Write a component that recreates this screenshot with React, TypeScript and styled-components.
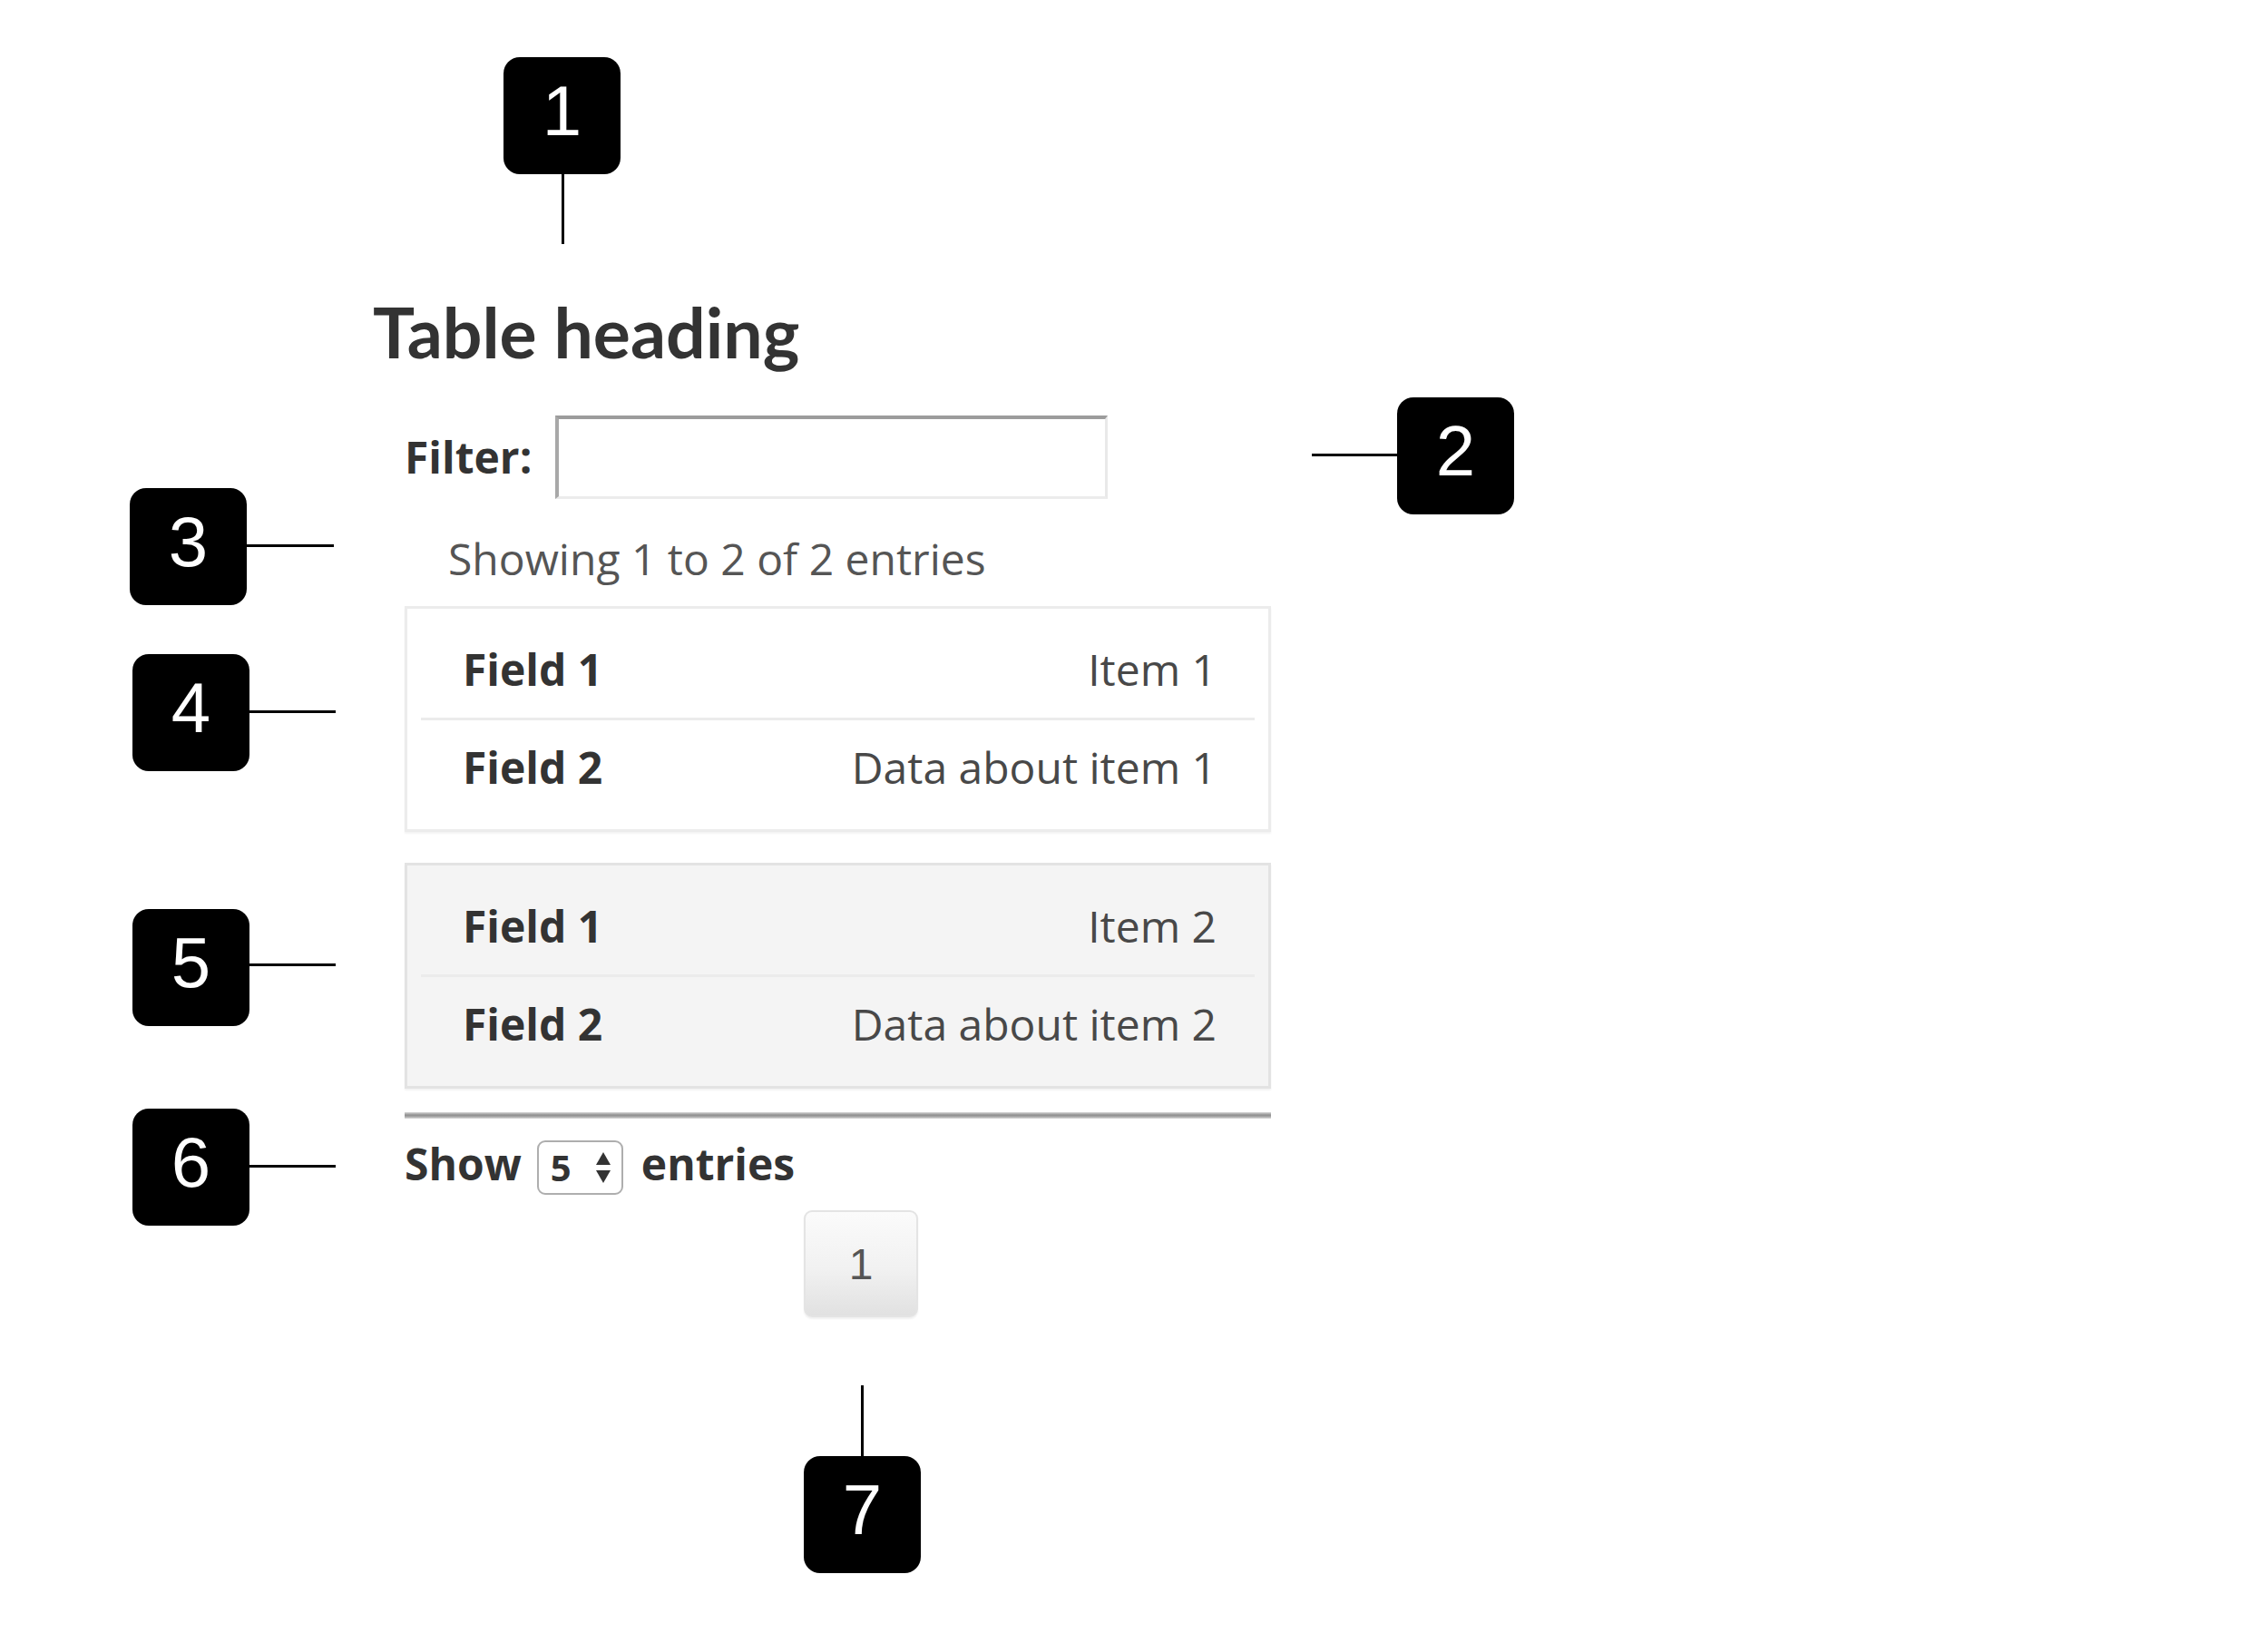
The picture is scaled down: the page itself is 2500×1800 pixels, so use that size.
import React from "react";
import styled, { createGlobalStyle } from "styled-components";

const Global = createGlobalStyle`
  html, body { margin: 0; padding: 0; background: #ffffff; }
  * { box-sizing: border-box; }
`;

const Page = styled.div`
  position: relative;
  width: 2500px;
  height: 1800px;
  overflow: hidden;
  font-family: "Open Sans", "Liberation Sans", sans-serif;
  color: #333;
`;

const Column = styled.main`
  width: calc(955px + 446px);
  padding: 318px 0 0 446px;
  display: flex;
  flex-direction: column;
  align-items: stretch;
`;

const Heading = styled.h2`
  margin: 0 0 0 -35px;
  font-family: Lato, "Open Sans", sans-serif;
  font-weight: 700;
  font-size: 77px;
  line-height: 94px;
  color: #333;
`;

const FilterRow = styled.div`
  display: flex;
  align-items: center;
  gap: 26px;
  margin-top: 46px;
`;

const FilterLabel = styled.label`
  font-weight: 700;
  font-size: 48px;
  line-height: 1.362;
  color: #333;
`;

const FilterInput = styled.input`
  width: 609px;
  height: 92px;
  margin: 0;
  padding: 0 12px;
  font: 400 40px "Open Sans", sans-serif;
  background: #fff;
  border-style: solid;
  border-width: 4px 3px 3px 4px;
  border-color: #9c9c9c #e9e9e9 #ececec #a8a8a8;
  outline: none;
`;

const Summary = styled.p`
  margin: 30px 0 0;
  padding-left: 48px;
  font-size: 48px;
  line-height: 72px;
  color: #555;
`;

const RecordCard = styled.section<{ $shaded?: boolean; $gap: number }>`
  margin-top: ${(p) => p.$gap}px;
  padding: 15px;
  border: 3px solid ${(p) => (p.$shaded ? "#e3e3e3" : "#ececec")};
  background: ${(p) => (p.$shaded ? "#f4f4f4" : "#ffffff")};
  box-shadow: 0 2px 2px rgba(0, 0, 0, 0.05);
`;

const FieldRow = styled.div<{ $divided?: boolean }>`
  display: flex;
  justify-content: space-between;
  align-items: center;
  padding: 16px 42px 17px 46px;
  border-top: ${(p) => (p.$divided ? "3px solid #ebebeb" : "none")};
  font-size: 48px;
  line-height: 72px;
`;

const FieldName = styled.span`
  font-weight: 700;
  color: #333;
`;

const FieldValue = styled.span`
  font-weight: 400;
  color: #484848;
  text-align: right;
`;

const Rule = styled.hr`
  margin: 26px 0 0;
  height: 7px;
  border: 0;
  background: linear-gradient(#d6d6d6, #8e8e8e 45%, #a8a8a8 70%, #dcdcdc);
`;

const LengthRow = styled.div`
  display: flex;
  align-items: flex-start;
  margin-top: 14px;
  font-size: 48px;
  line-height: 72px;
  font-weight: 700;
  color: #333;
`;

const SelectBox = styled.div`
  margin: 10px 20px 0 17px;
  width: 95px;
  height: 60px;
  border: 2px solid #aeaeae;
  border-radius: 9px;
  display: flex;
  align-items: center;
  justify-content: space-between;
  padding: 0 11px 0 13px;
  font-size: 40px;
  line-height: 1;
  font-weight: 700;
  color: #333;
`;

const PagerRow = styled.nav`
  display: flex;
  margin-top: 15px;
  padding-left: 440px;
`;

const PageButton = styled.button`
  width: 126px;
  height: 118px;
  margin: 0;
  padding: 0;
  border: 2px solid #e4e4e4;
  border-radius: 9px;
  background: linear-gradient(#fbfbfb, #f1f1f1 55%, #e1e1e1);
  box-shadow: 0 2px 2px rgba(0, 0, 0, 0.06);
  font-family: "Liberation Sans", Arial, sans-serif;
  font-size: 48px;
  color: #555;
`;

const Badge = styled.div<{ $x: number; $y: number }>`
  position: absolute;
  left: ${(p) => p.$x}px;
  top: ${(p) => p.$y}px;
  width: 129px;
  height: 129px;
  border-radius: 18px;
  background: #000;
  color: #fff;
  display: flex;
  align-items: center;
  justify-content: center;
  padding-bottom: 10px;
  font-family: "Liberation Sans", Arial, sans-serif;
  font-size: 78px;
  line-height: 1.15;
`;

const Leader = styled.div<{ $x: number; $y: number; $w: number; $h: number }>`
  position: absolute;
  left: ${(p) => p.$x}px;
  top: ${(p) => p.$y}px;
  width: ${(p) => p.$w}px;
  height: ${(p) => p.$h}px;
  background: #000;
`;

const callouts = [
  { n: 1, bx: 555, by: 63, line: { x: 619, y: 192, w: 3, h: 77 } },
  { n: 2, bx: 1540, by: 438, line: { x: 1446, y: 500, w: 96, h: 3 } },
  { n: 3, bx: 143, by: 538, line: { x: 270, y: 600, w: 98, h: 3 } },
  { n: 4, bx: 146, by: 721, line: { x: 273, y: 783, w: 97, h: 3 } },
  { n: 5, bx: 146, by: 1002, line: { x: 273, y: 1062, w: 97, h: 3 } },
  { n: 6, bx: 146, by: 1222, line: { x: 273, y: 1284, w: 97, h: 3 } },
  { n: 7, bx: 886, by: 1605, line: { x: 949, y: 1527, w: 3, h: 80 } },
];

const records = [
  { shaded: false, gap: 16, rows: [["Field 1", "Item 1"], ["Field 2", "Data about item 1"]] },
  { shaded: true, gap: 34, rows: [["Field 1", "Item 2"], ["Field 2", "Data about item 2"]] },
];

const SpinArrows = () => (
  <svg width="18" height="38" viewBox="0 0 18 38">
    <path d="M9 2 L17 16 L1 16 Z" fill="#333" />
    <path d="M1 22 L17 22 L9 36 Z" fill="#333" />
  </svg>
);

export default function App() {
  return (
    <Page>
      <Global />
      <Column>
        <Heading>Table heading</Heading>
        <FilterRow>
          <FilterLabel htmlFor="filter">Filter:</FilterLabel>
          <FilterInput id="filter" type="text" />
        </FilterRow>
        <Summary>Showing 1 to 2 of 2 entries</Summary>
        {records.map((r, i) => (
          <RecordCard key={i} $shaded={r.shaded} $gap={r.gap}>
            {r.rows.map(([k, v], j) => (
              <FieldRow key={k} $divided={j > 0}>
                <FieldName>{k}</FieldName>
                <FieldValue>{v}</FieldValue>
              </FieldRow>
            ))}
          </RecordCard>
        ))}
        <Rule />
        <LengthRow>
          <span>Show</span>
          <SelectBox>
            <span>5</span>
            <SpinArrows />
          </SelectBox>
          <span>entries</span>
        </LengthRow>
        <PagerRow>
          <PageButton>1</PageButton>
        </PagerRow>
      </Column>
      {callouts.map((c) => (
        <React.Fragment key={c.n}>
          <Leader $x={c.line.x} $y={c.line.y} $w={c.line.w} $h={c.line.h} />
          <Badge $x={c.bx} $y={c.by}>{c.n}</Badge>
        </React.Fragment>
      ))}
    </Page>
  );
}
